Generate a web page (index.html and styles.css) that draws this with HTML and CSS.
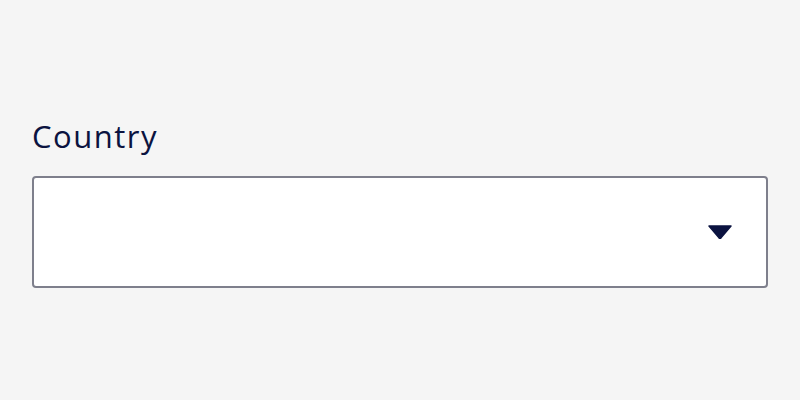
FILE: index.html
```html
<!DOCTYPE html>
<html lang="en">
<head>
  <meta charset="UTF-8" />
  <title>Country</title>
  <link rel="stylesheet" href="styles.css">
</head>
<body>
  <div class="field">
    <label class="field-label" for="country">Country</label>
    <div class="select" id="country" tabindex="0">
      <span class="select-value"></span>
      <svg class="select-arrow" width="24" height="14" viewBox="0 0 24 14">
        <path d="M1 1 H23 L13.2 12.6 Q12 13.8 10.8 12.6 Z" fill="#0b1340" stroke="#0b1340" stroke-width="1.5" stroke-linejoin="round"/>
      </svg>
    </div>
  </div>
</body>
</html>
```

FILE: styles.css
```css
body {
  margin: 0;
  background: #f5f5f5;
  font-family: "Open Sans", "Liberation Sans", sans-serif;
  color: #0b1340;
}

.field {
  padding: 116px 32px 0;
  display: flex;
  flex-direction: column;
  gap: 20px;
}

.field-label {
  font-size: 31px;
  line-height: 40px;
  letter-spacing: 1.5px;
}

.select {
  height: 108px;
  background: #fff;
  border: 2px solid #7e7f8c;
  border-radius: 4px;
  display: flex;
  align-items: center;
  justify-content: space-between;
  padding: 0 34px 0 16px;
}

.select-arrow {
  display: block;
}
```
